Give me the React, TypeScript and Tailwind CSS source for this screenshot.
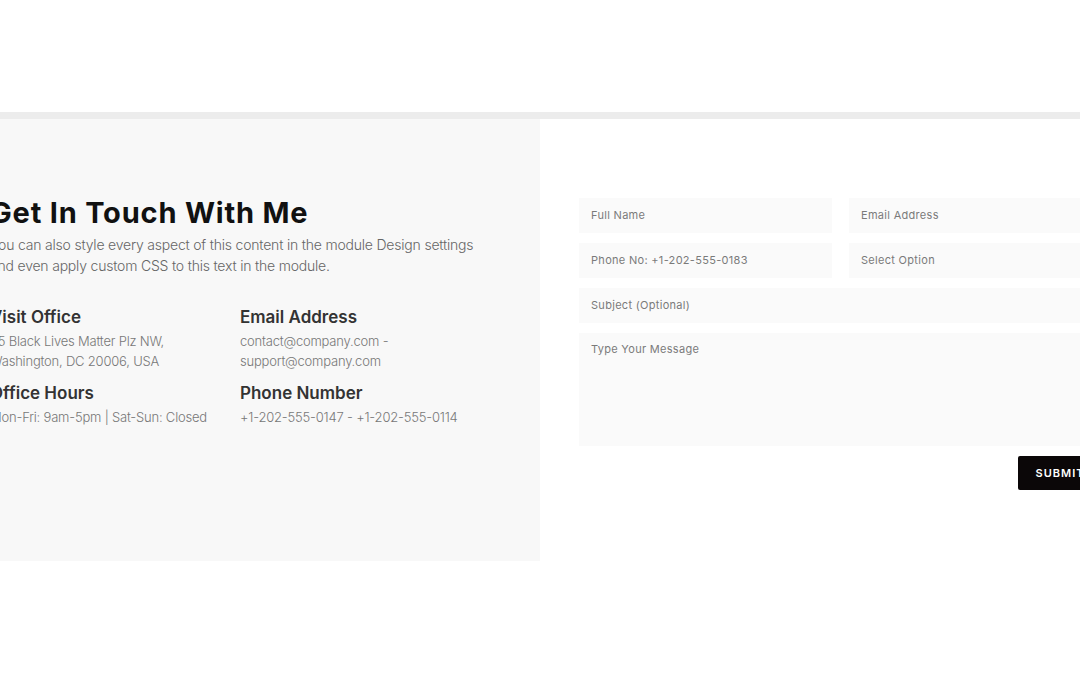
import React from "react";

// Contact section — info panel on the left, form on the right.
// The page is wider than the viewport, so both edges are cropped.

const INFO = [
  { title: "Visit Office", lines: ["25 Black Lives Matter Plz NW,", "Washington, DC 20006, USA"] },
  { title: "Email Address", lines: ["contact@company.com -", "support@company.com"] },
  { title: "Office Hours", lines: ["Mon-Fri: 9am-5pm | Sat-Sun: Closed"] },
  { title: "Phone Number", lines: ["+1-202-555-0147 - +1-202-555-0114"] },
];

function Field({ label, tall }: { label: string; tall?: boolean }) {
  return (
    <div
      className={`bg-[#fafafa] px-3 text-[11px] tracking-[0.3px] text-[#7a7a7a] ${
        tall ? "h-[113px] pt-[8px]" : "h-[35px] flex items-center"
      }`}
    >
      {label}
    </div>
  );
}

export default function App() {
  return (
    <div className="w-[1080px] h-[675px] overflow-hidden bg-white" style={{ fontFamily: "Inter, 'Noto Sans', sans-serif" }}>
      <div className="h-[112px]" />
      <div className="h-[7px] bg-[#ececec]" />
      <div className="flex ml-[-30px] w-[1180px]">
        {/* Left info panel */}
        <div className="w-[570px] h-[442px] bg-[#f8f8f8] pl-[20px] pt-[76px]">
          <h1 className="text-[29px] leading-[36px] font-bold tracking-[0.8px] text-[#111]">Get In Touch With Me</h1>
          <p className="mt-[3px] text-[14px] leading-[21px] font-light text-[#666] tracking-[-0.2px]">
            You can also style every aspect of this content in the module Design settings
            <br />
            and even apply custom CSS to this text in the module.
          </p>
          <div className="grid grid-cols-[250px_250px] mt-[30px] gap-y-[11px]">
            {INFO.map((it) => (
              <div key={it.title}>
                <h3 className="text-[17px] leading-[22px] font-semibold text-[#333]">{it.title}</h3>
                <div className="mt-[4px] text-[13px] leading-[19.5px] font-light text-[#777] tracking-[-0.2px]">
                  {it.lines.map((l) => (
                    <div key={l}>{l}</div>
                  ))}
                </div>
              </div>
            ))}
          </div>
        </div>

        {/* Right form */}
        <div className="pl-[39px] pt-[79px]">
          <div className="w-[523px] flex flex-col gap-[10px]">
            <div className="grid grid-cols-2 gap-[17px]">
              <Field label="Full Name" />
              <Field label="Email Address" />
            </div>
            <div className="grid grid-cols-2 gap-[17px]">
              <Field label="Phone No: +1-202-555-0183" />
              <Field label="Select Option" />
            </div>
            <Field label="Subject (Optional)" />
            <Field label="Type Your Message" tall />
          </div>
          <div className="w-[523px] flex justify-end mt-[10px]">
            <button className="h-[34px] w-[84px] bg-[#0b0708] rounded-[2px] text-white text-[11px] font-semibold tracking-[1px]">
              SUBMIT
            </button>
          </div>
        </div>
      </div>
    </div>
  );
}
